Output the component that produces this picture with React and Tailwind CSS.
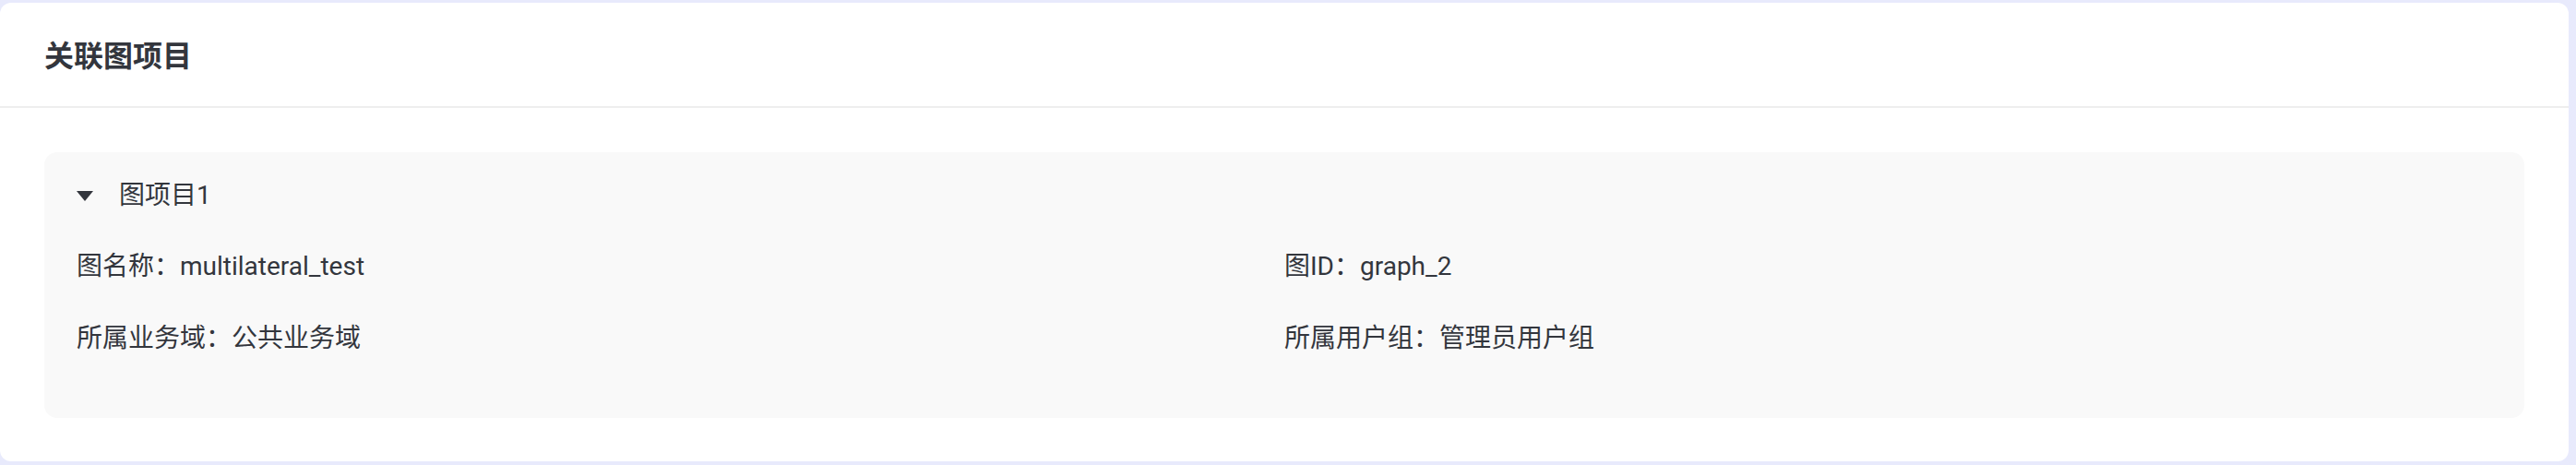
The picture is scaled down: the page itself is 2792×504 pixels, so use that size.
export default function App() {
  const rows = [
    ['图名称：', 'multilateral_test'],
    ['图ID：', 'graph_2'],
    ['所属业务域：', '公共业务域'],
    ['所属用户组：', '管理员用户组'],
  ];

  return (
    <div
      className="min-h-screen bg-[#e8eafc] pt-[3px] pr-2 pb-1 text-[#33363d]"
      style={{ fontFamily: 'Roboto, "Noto Sans CJK SC", "Noto Sans", sans-serif' }}
    >
      <div className="bg-white rounded-[12px]">
        {/* Card header */}
        <div className="h-[114px] px-12 pt-1 flex items-center border-b-2 border-[#eeeeee]">
          <span className="text-[32px] font-semibold leading-none">关联图项目</span>
        </div>

        {/* Card body */}
        <div className="p-12 pb-[47px]">
          <div className="bg-[#f9f9f9] rounded-[14px] px-[35px] pt-[27px] pb-[66px]">
            <div className="h-10 flex items-center">
              <svg width="18" height="11" viewBox="0 0 18 11" className="shrink-0">
                <path d="M0 0 H18 L9 11 Z" fill="#33363d" />
              </svg>
              <span className="ml-[28px] text-[28px] leading-10">图项目1</span>
            </div>

            <div className="mt-[37px] grid grid-cols-2 gap-y-[38px]">
              {rows.map(([label, value]) => (
                <div key={label} className="h-10 flex items-center text-[28px] leading-10 whitespace-nowrap">
                  <span>{label}</span>
                  <span>{value}</span>
                </div>
              ))}
            </div>
          </div>
        </div>
      </div>
    </div>
  );
}
